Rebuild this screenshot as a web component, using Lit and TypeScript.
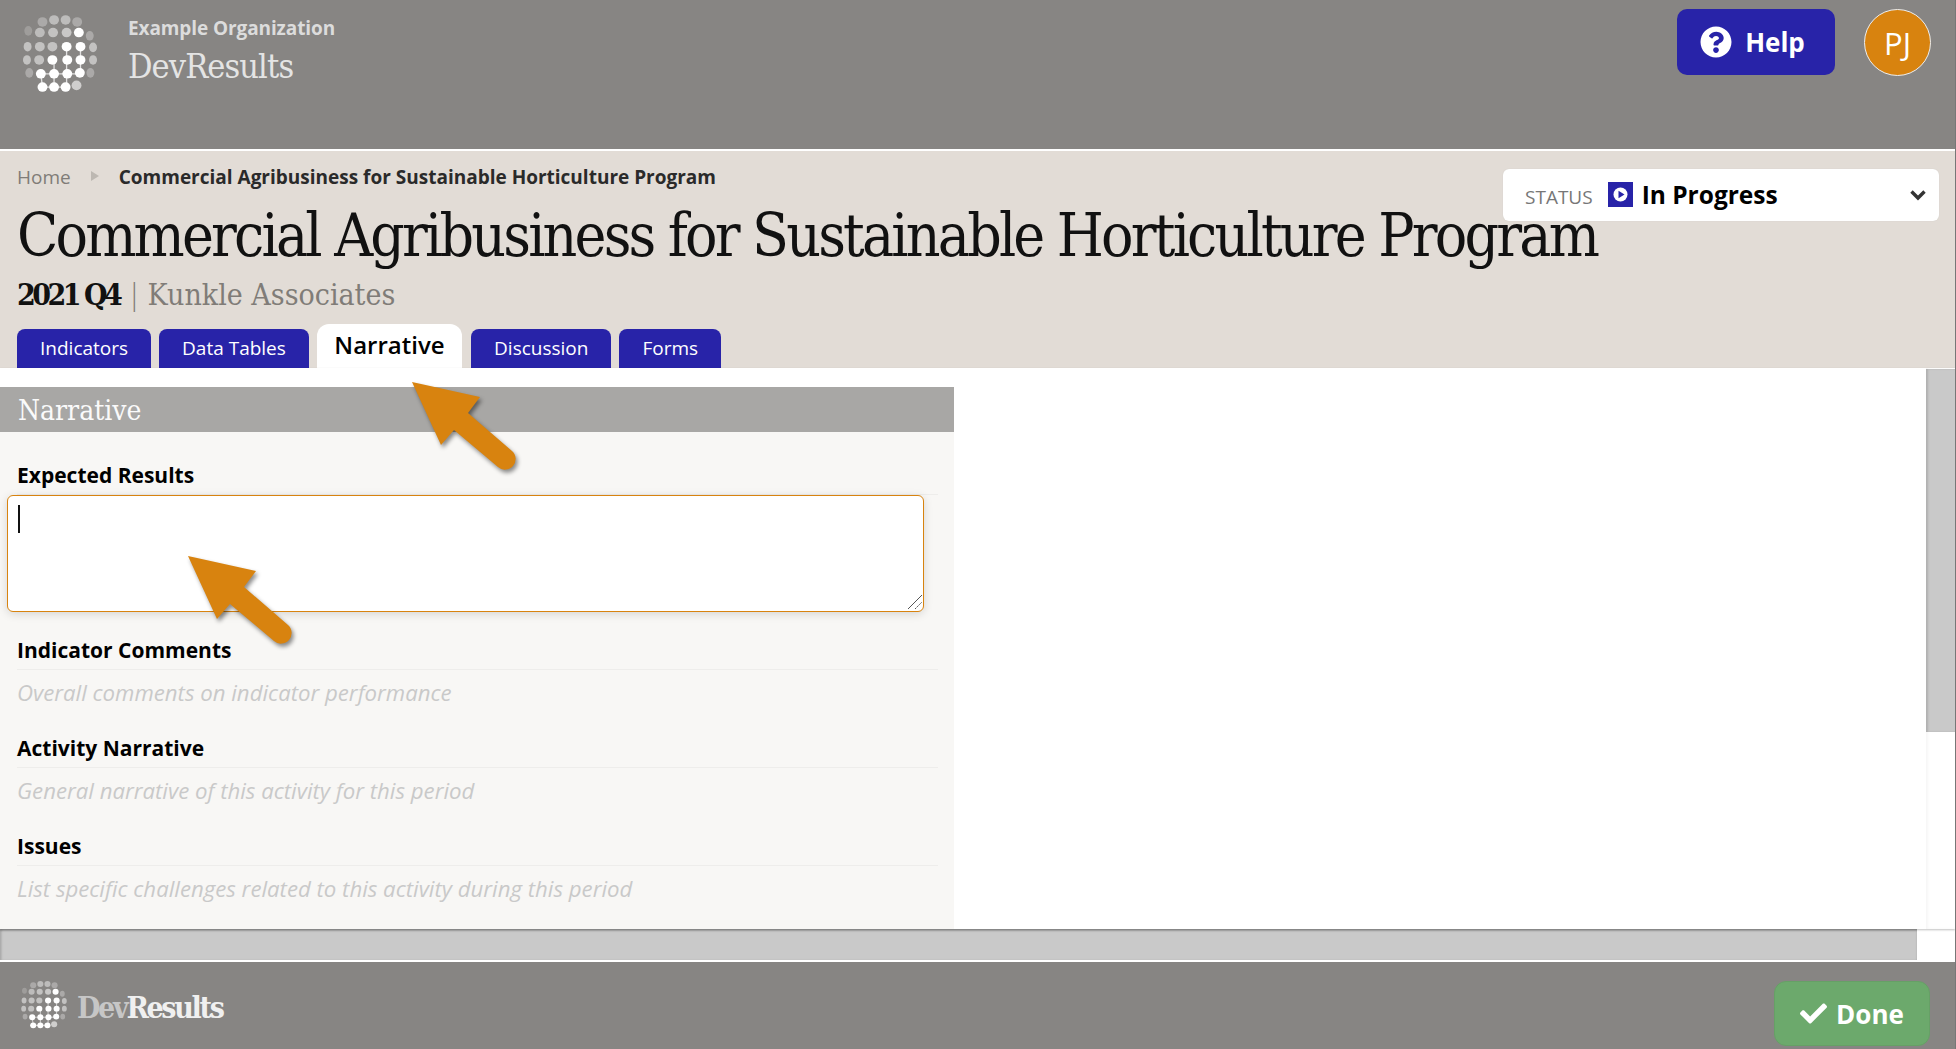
import { LitElement, html, css, svg } from "lit";
import { customElement } from "lit/decorators.js";

const SANS = css`"Open Sans", "Noto Sans", sans-serif`;
const SLAB = css`"DejaVu Serif Condensed", "DejaVu Serif", serif`;

// [x, y, brightness] of the dots of the globe mark, in a 0..240 box
const DOTS: [number, number, number][] = [
  [65, 18, 0.3], [100, 12, 0.45], [135, 12, 0.45], [170, 18, 0.3],
  [22, 45, 0.2], [57, 50, 0.45], [97, 50, 0.5], [138, 50, 0.55], [175, 50, 1], [208, 60, 0.3],
  [20, 93, 0.5], [57, 93, 0.5], [95, 93, 0.5], [138, 93, 1], [180, 93, 1], [218, 95, 0.5],
  [18, 133, 0.5], [55, 133, 0.5], [95, 133, 1], [140, 133, 1], [180, 133, 1], [218, 133, 0.5],
  [25, 172, 0.3], [60, 175, 1], [100, 175, 1], [140, 175, 1], [178, 172, 1], [210, 172, 0.3],
  [65, 215, 1], [100, 215, 1], [135, 215, 1], [168, 210, 0.6],
];

const globe = (cls: string) => html`<svg class=${cls} viewBox="0 0 236 230" aria-hidden="true">
  ${DOTS.map(
    ([x, y, o]) => svg`<ellipse cx=${x} cy=${y} rx=${x < 30 || x > 205 ? 12 : 15} ry="14.5" fill="#fff" opacity=${o}></ellipse>`
  )}
  <path d="M138 93V215M180 93V172M100 133V215M60 175L65 215M60 175H178M65 215H135" stroke="#fff" stroke-width="4" opacity=".75" fill="none"></path>
</svg>`;

const arrow = (cls: string) => html`<svg class="arrow ${cls}" viewBox="0 0 120 100" aria-hidden="true">
  <path d="M3 3 L71 18 L59 34 L103 72 A10.5 10.5 0 0 1 89 88 L45 51 L32 66 Z" fill="#d8830f"></path>
</svg>`;

@customElement("app-root")
export class AppRoot extends LitElement {
  static styles = css`
    :host {
      display: flex;
      flex-direction: column;
      position: relative;
      width: 1956px;
      height: 1049px;
      overflow: hidden;
      background: #fff;
      font-family: ${SANS};
      box-sizing: border-box;
      border-right: 1px solid #777;
    }
    .top {
      height: 151px;
      flex: none;
      box-sizing: border-box;
      background: #878583;
      border-bottom: 2px solid #fff;
      display: flex;
      align-items: flex-start;
      padding: 9px 24px 0 21px;
    }
    .top-logo { width: 78px; height: 78px; margin: 6px 29px 0 0; flex: none; }
    .org { font-size: 19px; line-height: 24px; font-weight: 700; color: #dcdcdc; margin-top: 7px; letter-spacing: -0.1px; }
    .brand { font-family: ${SLAB}; font-size: 34px; line-height: 42px; color: #e4e4e4; font-weight: 400; letter-spacing: -0.9px; margin-top: 5px; }
    .spacer { flex: 1; }
    .help {
      width: 158px; height: 66px; background: #2823a8; border-radius: 10px; color: #fff;
      font-size: 26px; font-weight: 700; display: flex; align-items: center; justify-content: center; gap: 13px;
      margin-right: 29px; box-sizing: border-box; padding-right: 7px;
    }
    .help svg { width: 32px; height: 32px; fill: #fff; }
    .avatar {
      width: 67px; height: 67px; border-radius: 50%; background: #d8830f; border: 1px solid #eee;
      box-sizing: border-box; color: #fff; font-size: 31px; font-weight: 400; display: flex; align-items: center; justify-content: center;
    }
    .head {
      height: 217px; flex: none; background: #e2dcd6; position: relative; padding: 0 0 0 17px; box-sizing: border-box;
      display: flex; flex-direction: column;
    }
    .crumbs { display: flex; align-items: center; font-size: 19px; line-height: 24px; margin: 14px 0 0; color: #807c78; }
    .crumbs .sep { width: 0; height: 0; border-left: 8px solid #bdb8b2; border-top: 5px solid transparent; border-bottom: 5px solid transparent; margin: -2px 20px 0 20px; }
    .crumbs b { font-weight: 700; color: #2a2a2a; font-size: 19px; }
    h1 { font-family: ${SLAB}; font-weight: 400; font-size: 60px; line-height: 70px; margin: 11px 0 0; color: #111; letter-spacing: -2.8px; white-space: nowrap; }
    .sub { font-family: ${SLAB}; font-size: 30px; line-height: 38px; margin: 5px 0 0; color: #807c78; letter-spacing: 0; white-space: nowrap; }
    .sub b { color: #111; font-weight: 700; letter-spacing: -3.5px; }
    .sub i { font-family: ${SANS}; font-style: normal; font-weight: 300; margin: 0 5px 0 7px; }
    .tabs { display: flex; align-items: flex-end; margin: auto 0 0; gap: 8px; height: 45px; }
    .tab {
      height: 39px; background: #2823a8; color: #fff; font-size: 19px; line-height: 38px; padding: 0 23px;
      border-radius: 8px 8px 0 0; box-sizing: border-box; text-align: center;
    }
    .tab.on { height: 44px; background: #fff; color: #000; font-size: 24px; font-weight: 600; line-height: 42px; padding: 0 17.5px; border-radius: 12px 12px 0 0; margin-right: 1px; }
    .status {
      position: absolute; left: 1503px; top: 18px; width: 436px; height: 52px; background: #fff; border-radius: 6px;
      box-sizing: border-box; display: flex; align-items: center; padding: 0 13px 0 22px; box-shadow: 0 0 1px #c9c4be;
    }
    .status .lbl { font-size: 19px; color: #777; margin: 3px 15px 0 0; }
    .status .ic { width: 25px; height: 25px; margin: 0 9px 1px 0; flex: none; }
    .status .val { font-size: 24.5px; font-weight: 700; color: #000; flex: 1; margin-bottom: 2px; }
    .status .chev { width: 16px; height: 12px; fill: none; stroke: #333; stroke-width: 3.4; }
    .main { flex: none; height: 561px; display: grid; grid-template-columns: 1fr 29px; grid-template-rows: minmax(0, 1fr); box-shadow: 0 1px 2px rgba(0,0,0,.25); position: relative; }
    .content { padding-top: 19px; min-width: 0; min-height: 0; display: flex; flex-direction: column; overflow: hidden; }
    .panel { width: 954px; flex: 1; background: #f8f7f5; }
    .panel h2 { margin: 0; height: 45px; background: #a8a7a5; font-family: ${SLAB}; font-weight: 400; font-size: 28px; line-height: 47px; color: #fafafa; padding-left: 18px; letter-spacing: 0; }
    .field { margin: 0 16px 0 17px; height: 98.2px; box-sizing: border-box; }
    .field.first { padding-top: 29px; height: 204px; }
    .field label { display: block; font-size: 21px; line-height: 28px; font-weight: 700; color: #000; }
    .rule { height: 1px; background: #eeedeb; margin: 5px 0 0; }
    .ph { font-size: 22.2px; font-style: italic; color: #c9c9c9; line-height: 28px; margin-top: 9px; }
    .tawrap { position: relative; margin: 0 0 0 -10px; width: 917px; height: 117px; }
    .tawrap textarea {
      display: block; width: 100%; height: 100%; box-sizing: border-box; border: 1.5px solid #d8830f; border-radius: 6px; background: #fff;
      box-shadow: 0 2px 10px rgba(0,0,0,.14); resize: none; outline: none; font: inherit; padding: 0;
    }
    .caret { position: absolute; left: 11px; top: 10px; width: 1.5px; height: 28px; background: #111; }
    .grip { position: absolute; right: 2px; bottom: 3px; width: 15px; height: 15px; fill: none; stroke: #555; stroke-width: 1; }
    .side { box-shadow: inset 2px 0 3px rgba(0,0,0,.04); }
    .vbar { background: #c9c9c9; height: 363px; margin-top: 1px; box-shadow: inset 2px 0 2px rgba(0,0,0,.12); }
    .hrow { height: 31px; flex: none; display: flex; margin-bottom: 2px; }
    .hbar { width: 1917px; background: #c9c9c9; box-shadow: inset 0 2px 2px rgba(0,0,0,.18), inset 2px 0 2px rgba(0,0,0,.1); }
    .foot {
      flex: none; height: 87px; box-sizing: border-box; background: #878583; display: flex; align-items: flex-start; padding: 0 25px 0 20px; position: relative;
    }
    .foot-logo { width: 48px; height: 48px; margin: 19px 9px 0 0; flex: none; }
    .foot-brand { font-family: ${SLAB}; font-size: 30px; line-height: 40px; font-weight: 700; letter-spacing: -2.3px; margin-top: 26px; color: #f0f0f0; }
    .foot-brand span { color: #c6c6c6; }
    .done {
      width: 156px; height: 65px; margin-top: 19px; background: #6ca96c; border-radius: 12px; border: 1px solid #66a066; box-sizing: border-box;
      color: #fff; font-size: 26px; font-weight: 700; display: flex; align-items: center; justify-content: center; gap: 9px;
    }
    .done svg { width: 27px; height: 27px; fill: #fff; }
    .arrow { position: absolute; width: 120px; height: 100px; filter: drop-shadow(2px 3px 2px rgba(0,0,0,.45)); overflow: visible; }
    .a1 { left: 409px; top: 379px; }
    .a2 { left: 185px; top: 553px; }
  `;

  render() {
    return html`
      <div class="top">
        ${globe("top-logo")}
        <div>
          <div class="org">Example Organization</div>
          <div class="brand">DevResults</div>
        </div>
        <div class="spacer"></div>
        <div class="help">
          <svg viewBox="0 0 512 512"><path d="M504 256c0 136.997-111.043 248-248 248S8 392.997 8 256C8 119.083 119.043 8 256 8s248 111.083 248 248zM262.655 90c-54.497 0-89.255 22.957-116.549 63.758-3.536 5.286-2.353 12.415 2.715 16.258l34.699 26.31c5.205 3.947 12.621 3.008 16.665-2.122 17.864-22.658 30.113-35.797 57.303-35.797 20.429 0 45.698 13.148 45.698 32.958 0 14.976-12.363 22.667-32.534 33.976C247.128 238.528 216 254.941 216 296v4c0 6.627 5.373 12 12 12h56c6.627 0 12-5.373 12-12v-1.333c0-28.462 83.186-29.647 83.186-106.667 0-58.002-60.165-102-116.531-102zM256 338c-25.365 0-46 20.635-46 46 0 25.364 20.635 46 46 46s46-20.636 46-46c0-25.365-20.635-46-46-46z"></path></svg>
          Help
        </div>
        <div class="avatar">PJ</div>
      </div>
      <div class="head">
        <div class="crumbs">Home<span class="sep"></span><b>Commercial Agribusiness for Sustainable Horticulture Program</b></div>
        <h1>Commercial Agribusiness for Sustainable Horticulture Program</h1>
        <div class="sub"><b>2021 Q4</b><i>|</i>Kunkle Associates</div>
        <div class="tabs">
          <div class="tab">Indicators</div>
          <div class="tab">Data Tables</div>
          <div class="tab on">Narrative</div>
          <div class="tab">Discussion</div>
          <div class="tab">Forms</div>
        </div>
        <div class="status">
          <span class="lbl">STATUS</span>
          <svg class="ic" viewBox="0 0 25 25"><rect width="25" height="25" fill="#2823a8"></rect><circle cx="12.5" cy="12.5" r="7" fill="#fff"></circle><path d="M10.5 8.8L16.5 12.5L10.5 16.2Z" fill="#2823a8"></path></svg>
          <span class="val">In Progress</span>
          <svg class="chev" viewBox="0 0 16 12"><path d="M1.5 2.5L8 9L14.5 2.5"></path></svg>
        </div>
      </div>
      <div class="main">
        <div class="content">
          <div class="panel">
            <h2>Narrative</h2>
            <div class="field first">
              <label>Expected Results</label>
              <div class="rule"></div>
              <div class="tawrap">
                <textarea readonly></textarea>
                <span class="caret"></span>
                <svg class="grip" viewBox="0 0 15 15"><path d="M1 15L15 1"></path><path d="M8 15L15 8" stroke-dasharray="2 1"></path></svg>
              </div>
            </div>
            ${[
              ["Indicator Comments", "Overall comments on indicator performance"],
              ["Activity Narrative", "General narrative of this activity for this period"],
              ["Issues", "List specific challenges related to this activity during this period"],
            ].map(
              ([l, p]) => html`<div class="field">
                <label>${l}</label>
                <div class="rule"></div>
                <div class="ph">${p}</div>
              </div>`
            )}
          </div>
        </div>
        <div class="side"><div class="vbar"></div></div>
      </div>
      <div class="hrow"><div class="hbar"></div></div>
      <div class="foot">
        ${globe("foot-logo")}
        <div class="foot-brand"><span>Dev</span>Results</div>
        <div class="spacer"></div>
        <div class="done">
          <svg viewBox="0 0 512 512"><path d="M173.898 439.404l-166.4-166.4c-9.997-9.997-9.997-26.206 0-36.204l36.203-36.204c9.997-9.998 26.207-9.998 36.204 0L192 312.69 432.095 72.596c9.997-9.997 26.207-9.997 36.204 0l36.203 36.204c9.997 9.997 9.997 26.206 0 36.204l-294.4 294.401c-9.998 9.997-26.207 9.997-36.204-.001z"></path></svg>
          Done
        </div>
      </div>
      ${arrow("a1")}${arrow("a2")}
    `;
  }
}
